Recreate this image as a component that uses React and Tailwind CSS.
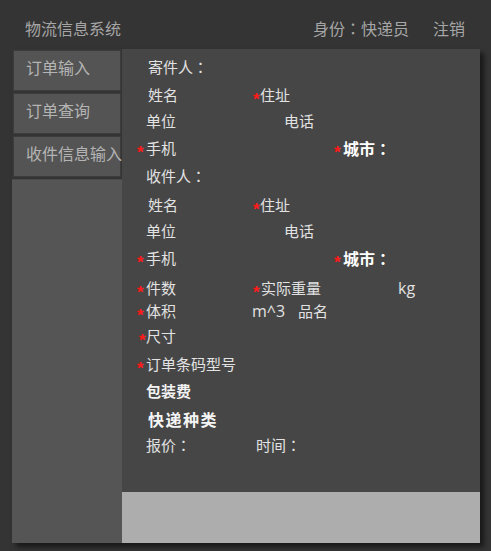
import React from "react";

const FONT = { fontFamily: '"Noto Sans CJK SC", "Noto Sans", sans-serif' };

function Colon() {
  return <span style={{ fontFamily: '"Noto Sans CJK TC", "Noto Sans CJK SC", sans-serif' }}>：</span>;
}

function Star() {
  return (
    <span
      className="inline-block w-[9px] shrink-0 text-[#ff1a1a] text-[17px] font-bold leading-none translate-y-[4px]"
      style={{ fontFamily: '"Liberation Sans", sans-serif' }}
    >
      *
    </span>
  );
}

function SideButton({ children }) {
  return (
    <div className="ml-px w-[108px] h-[41px] bg-[#545454] border border-[#3c3c3c] flex items-center pl-[12px] pb-[7px] text-[16px] text-[#b4b4b4] whitespace-nowrap">
      {children}
    </div>
  );
}

export default function App() {
  return (
    <div className="w-[491px] h-[551px] bg-[#343434] text-[15px] overflow-hidden" style={FONT}>
      <div className="h-[49px] flex items-center pl-[25px] pr-[26px] pt-[7px] text-[16px] text-[#a6a6a6]">
        <div className="flex-1">物流信息系统</div>
        <div>身份<Colon />快递员</div>
        <div className="ml-[24px]">注销</div>
      </div>
      <div className="ml-[12px] w-[468px] h-[494px] flex shadow-[4px_4px_5px_rgba(0,0,0,0.55)]">
        <div className="w-[110px] flex flex-col">
          <div className="h-px" />
          <SideButton>订单输入</SideButton>
          <div className="h-[2px]" />
          <SideButton>订单查询</SideButton>
          <div className="h-[2px]" />
          <SideButton>收件信息输入</SideButton>
          <div className="h-[2px]" />
          <div className="flex-1 bg-[#555555] border-t border-[#4a4a4a]" />
        </div>
        <div className="flex-1 flex flex-col">
          <div className="flex-1 bg-[#464646] pt-[4px] flex flex-col text-[#e2e2e2] leading-[20px] whitespace-nowrap">
            <div className="h-[28px] flex items-center pl-[26px]">寄件人<Colon /></div>
            <div className="h-[28px] flex items-center">
              <div className="w-[131px] pl-[26px]">姓名</div>
              <Star />
              <span className="-ml-[2px]">住址</span>
            </div>
            <div className="h-[24px] flex items-center">
              <div className="w-[162px] pl-[24px]">单位</div>
              <span>电话</span>
            </div>
            <div className="h-[30px] flex items-center">
              <div className="w-[212px] pl-[15px] flex items-center">
                <Star />
                <span>手机</span>
              </div>
              <Star />
              <span className="text-[16px] font-bold text-white">城市<Colon /></span>
            </div>
            <div className="h-[26px] flex items-center pl-[24px]">收件人<Colon /></div>
            <div className="h-[32px] flex items-center">
              <div className="w-[131px] pl-[26px]">姓名</div>
              <Star />
              <span className="-ml-[2px]">住址</span>
            </div>
            <div className="h-[20px] flex items-center">
              <div className="w-[162px] pl-[24px]">单位</div>
              <span>电话</span>
            </div>
            <div className="h-[34px] flex items-center">
              <div className="w-[212px] pl-[15px] flex items-center">
                <Star />
                <span>手机</span>
              </div>
              <Star />
              <span className="text-[16px] font-bold text-white">城市<Colon /></span>
            </div>
            <div className="h-[26px] flex items-center">
              <div className="w-[131px] pl-[15px] flex items-center">
                <Star />
                <span>件数</span>
              </div>
              <div className="w-[145px] flex items-center">
                <Star />
                <span className="-ml-px">实际重量</span>
              </div>
              <span style={{ fontFamily: '"Open Sans", "Noto Sans", sans-serif' }} className="text-[16px]">kg</span>
            </div>
            <div className="h-[20px] flex items-center">
              <div className="w-[130px] pl-[15px] flex items-center">
                <Star />
                <span>体积</span>
              </div>
              <span className="w-[46px] text-[16px]" style={{ fontFamily: '"Open Sans", "Noto Sans", sans-serif' }}>m^3</span>
              <span>品名</span>
            </div>
            <div className="h-[30px] flex items-center pl-[17px]">
              <Star />
              <span className="-ml-[2px]">尺寸</span>
            </div>
            <div className="h-[26px] flex items-center pl-[15px]">
              <Star />
              <span>订单条码型号</span>
            </div>
            <div className="h-[28px] flex items-center pl-[24px] font-bold text-[#f2f2f2]">包装费</div>
            <div className="h-[28px] flex items-center pl-[26px] text-[16px] font-bold text-[#f5f5f5] tracking-[1.5px]">快递种类</div>
            <div className="h-[24px] flex items-center">
              <div className="w-[134px] pl-[24px]">报价<Colon /></div>
              <span>时间<Colon /></span>
            </div>
          </div>
          <div className="h-[51px] bg-[#adadad]" />
        </div>
      </div>
    </div>
  );
}
